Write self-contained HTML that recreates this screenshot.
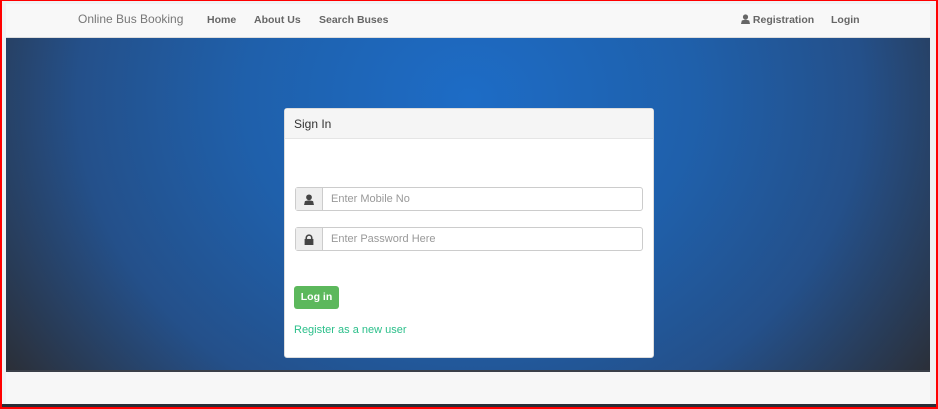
<!DOCTYPE html>
<html><head><style>
*{margin:0;padding:0;box-sizing:border-box}
body{width:938px;height:409px;overflow:hidden;background:#f0f2f4;font-family:"Liberation Sans",sans-serif;position:relative}
.frame{position:absolute;left:0;top:0;width:938px;height:409px;border:2px solid #f00;border-top-width:1px;pointer-events:none;z-index:10}
.nav{position:absolute;left:6px;top:4px;width:924px;height:34px;background:#f8f8f8;border-bottom:1px solid #ddd}
.nav span{position:absolute;top:10px;font-size:10.5px;font-weight:bold;color:#666}
.brand{font-size:12px!important;font-weight:normal!important;color:#777!important;top:8px!important}
.hero{position:absolute;left:6px;top:38px;width:924px;height:334px;background:radial-gradient(ellipse 560px 480px at 464px 60px,#1d6cc6 0%,#1f60ab 40%,#24508a 70%,#2b2f38 100%);border-bottom:2px solid #3a3f48}
.foot{position:absolute;left:6px;top:372px;width:924px;height:33px;background:#f7f7f7}
.dark{position:absolute;left:2px;top:404px;width:934px;height:3px;background:#2a2e36}
.sb{position:absolute;left:930px;top:4px;width:6px;height:400px;background:#f0f0f0}
.panel{position:absolute;left:284px;top:108px;width:370px;height:250px;background:#fff;border-radius:3px;border:1px solid #ddd}
.ph{height:30px;background:#f5f5f5;border-bottom:1px solid #e5e5e5;padding:8px 9px;font-size:12px;color:#333}
.ig{position:absolute;left:10px;width:348px;height:24px;border:1px solid #ccc;border-radius:3px;display:flex}
.ad{width:27px;background:#eee;border-right:1px solid #ccc;display:flex;align-items:center;justify-content:center}
.ig .t{padding:5px 8px;font-size:11px;color:#999}
.btn{position:absolute;left:9px;top:177px;width:45px;height:23px;background:#5cb85c;border-radius:3px;color:#fff;font-size:10.5px;font-weight:bold;text-align:center;line-height:23px}
.reg{position:absolute;left:9px;top:215px;font-size:11px;color:#2bbf8a}
</style></head><body>
<div class="nav">
<span class="brand" style="left:72px">Online Bus Booking</span>
<span style="left:201px">Home</span>
<span style="left:248px">About Us</span>
<span style="left:313px">Search Buses</span>
<span style="left:735px"><svg width="9" height="10" viewBox="0 0 9 10" style="vertical-align:-1px"><circle cx="4.5" cy="3" r="2.6" fill="#666"/><path d="M0 10 L0.8 6.5 Q4.5 5 8.2 6.5 L9 10Z" fill="#666"/></svg> Registration</span>
<span style="left:825px">Login</span>
</div>
<div class="hero"></div>
<div class="foot"></div>
<div class="sb"></div>
<div class="dark"></div>
<div class="panel">
<div class="ph">Sign In</div>
<div class="ig" style="top:78px"><div class="ad"><svg width="10" height="11" viewBox="0 0 9 10"><circle cx="4.5" cy="3" r="2.6" fill="#444"/><path d="M0 10 L0.8 6.5 Q4.5 5 8.2 6.5 L9 10Z" fill="#444"/></svg></div><div class="t">Enter Mobile No</div></div>
<div class="ig" style="top:118px"><div class="ad"><svg width="10" height="11" viewBox="0 0 9 10"><path d="M2 5V3.5a2.5 2.5 0 0 1 5 0V5" stroke="#444" stroke-width="1.4" fill="none"/><rect x="0.5" y="4.5" width="8" height="5.5" fill="#444"/></svg></div><div class="t">Enter Password Here</div></div>
<div class="btn">Log in</div>
<div class="reg">Register as a new user</div>
</div>
<div class="frame"></div>
</body></html>
